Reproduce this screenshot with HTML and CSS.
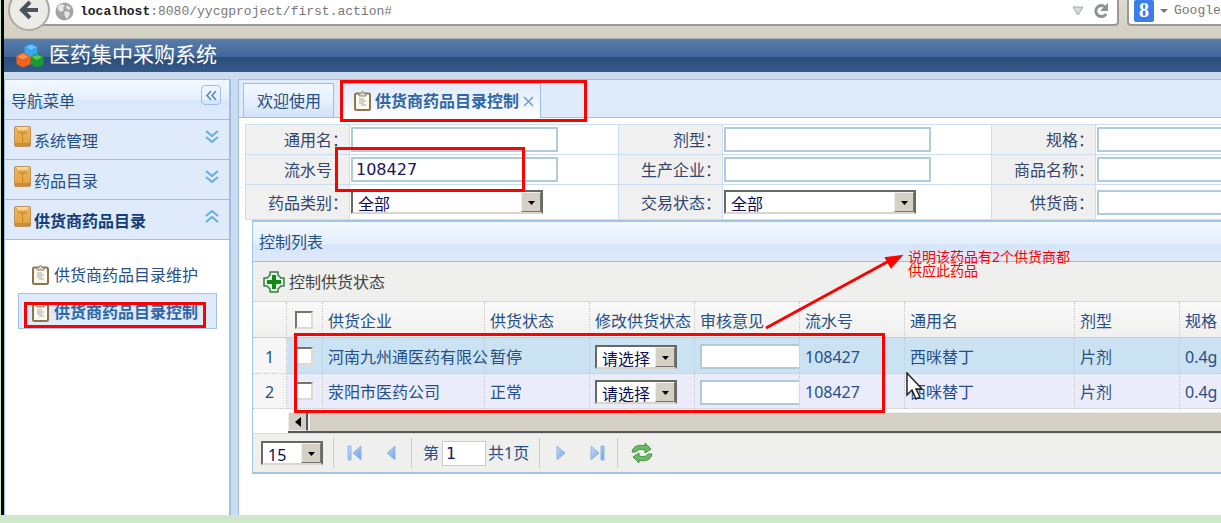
FILE: index.html
```
<!DOCTYPE html>
<html lang="zh-CN">
<head>
    <meta charset="UTF-8">
    <meta name="viewport" content="width=device-width, initial-scale=1.0">
    <title>医药集中采购系统</title>
    <link rel="stylesheet" href="styles.css">
</head>
<body>
    <!-- icons used more than once -->
    <svg class="sprite" aria-hidden="true">
        <defs>
            <linearGradient id="gold" x1="0" y1="0" x2="0" y2="1">
                <stop offset="0" stop-color="#f9d48c"/>
                <stop offset="0.25" stop-color="#eeb353"/>
                <stop offset="1" stop-color="#e2a03f"/>
            </linearGradient>
            <linearGradient id="blue" x1="0" y1="0" x2="1" y2="1">
                <stop offset="0" stop-color="#c4dcfa"/>
                <stop offset="1" stop-color="#6f9fe0"/>
            </linearGradient>
        </defs>
        <symbol id="i-box" viewBox="0 0 17 21">
            <rect x="0.500" y="0.500" width="16" height="20" rx="1.500" fill="url(#gold)" stroke="#c3935a"/>
            <path d="M1 1l3 4h9l3-4" fill="#f9d793" stroke="#d29a4c"/>
            <path d="M4 7h9M8.500 7v9" fill="none" stroke="#c07f28"/>
            <path d="M1 17h15v3H1z" fill="#c98a3a"/>
        </symbol>
        <symbol id="i-clip" viewBox="0 0 17 20">
            <rect x="1" y="2.500" width="15" height="16.500" rx="1.500" fill="#fdfaf0" stroke="#8f7450" stroke-width="2"/>
            <path d="M5 5V2.500h2L8 .5h1l1 2h2V5z" fill="#dedbd0" stroke="#8a8374"/>
            <path d="M5 8h5M5 10h7M5 12h5M7 14h5" stroke="#aaa69c" fill="none"/>
        </symbol>
        <symbol id="i-down" viewBox="0 0 15 14">
            <path d="M1 1l6 5 6-5M1 7l6 5 6-5" fill="none" stroke="#65ace0" stroke-width="2"/>
        </symbol>
        <symbol id="i-up" viewBox="0 0 15 14">
            <path d="M1 6l6-5 6 5M1 12l6-5 6 5" fill="none" stroke="#65ace0" stroke-width="2"/>
        </symbol>
        <symbol id="i-arrow" viewBox="0 0 18 18">
            <path d="M6 8h7l-3.500 4z" fill="#000"/>
        </symbol>
    </svg>

    <div class="page">
        <div class="browser-bar">
            <button class="back" aria-label="后退">
                <svg width="22" height="22" viewBox="0 0 22 22"><path d="M12 3L4 11l8 8M5 11h15" fill="none" stroke="#4b545c" stroke-width="4"/></svg>
            </button>
            <div class="url">
                <svg width="19" height="19" viewBox="0 0 19 19"><circle cx="9.500" cy="9.500" r="9" fill="#a3a3a3"/><path d="M3 4l4-2 3 2-2 2 1 2-3 2-3-2zM9 10l4-1 2 3-3 5-2-3zM12 3l4 3-2 2-3-2z" fill="#e6e6e6"/></svg>
                <span class="address"><b>localhost</b>:8080/yycgproject/first.action#</span>
                <svg width="12" height="11" viewBox="0 0 12 11"><path d="M1 1h10L6 9z" fill="#d6dadb" stroke="#a5abad"/></svg>
                <svg class="reload" width="16" height="16" viewBox="0 0 16 16"><path d="M12 4a5.500 5.500 0 1 0 1 7" fill="none" stroke="#8b9298" stroke-width="3"/><path d="M15 0v8H7z" fill="#8b9298"/></svg>
            </div>
            <div class="search">
                <span class="google">8</span>
                <svg width="8" height="6" viewBox="0 0 8 6"><path d="M0 1h8L4 5z" fill="#777"/></svg>
                <span>Google</span>
            </div>
        </div>

        <header class="header">
            <svg width="28" height="24" viewBox="0 0 28 24">
                <path d="M15 0l6 3v7l-6 3-6-3V3z" fill="#35a8ee" stroke="#35a8ee" stroke-linejoin="round"/>
                <path d="M15 1l5 2-5 3-5-3z" fill="#6cc5fb"/>
                <path d="M21 10l6 3v7l-6 3-6-3v-7z" fill="#1d9a38" stroke="#1d9a38" stroke-linejoin="round"/>
                <path d="M21 11l5 2-5 3-5-3z" fill="#5cc957"/>
                <path d="M7 9l7 3v8l-7 3-6-3v-8z" fill="#ef6321" stroke="#ef6321" stroke-linejoin="round"/>
                <path d="M7 10l5 3-5 2-5-2z" fill="#ff9a55"/>
            </svg>
            <h1>医药集中采购系统</h1>
        </header>

        <div class="layout">
            <aside class="sidebar">
                <div class="side-title">
                    <span>导航菜单</span>
                    <button class="collapse" aria-label="收起">
                        <svg width="12" height="11" viewBox="0 0 12 11"><path d="M6 1L2 5.500 6 10M11 1L7 5.500 11 10" fill="none" stroke="#4f86bf" stroke-width="1.500"/></svg>
                    </button>
                </div>
                <a class="group" href="#"><svg class="box"><use href="#i-box"/></svg><span>系统管理</span><svg class="chev"><use href="#i-down"/></svg></a>
                <a class="group" href="#"><svg class="box"><use href="#i-box"/></svg><span>药品目录</span><svg class="chev"><use href="#i-down"/></svg></a>
                <a class="group open" href="#"><svg class="box"><use href="#i-box"/></svg><span>供货商药品目录</span><svg class="chev"><use href="#i-up"/></svg></a>
                <nav class="menu">
                    <a href="#"><svg class="clip"><use href="#i-clip"/></svg>供货商药品目录维护</a>
                    <a class="selected" href="#"><svg class="clip"><use href="#i-clip"/></svg>供货商药品目录控制</a>
                </nav>
            </aside>

            <main class="main">
                <div class="tabs">
                    <a class="tab" href="#">欢迎使用</a>
                    <a class="tab active" href="#"><svg class="clip"><use href="#i-clip"/></svg>供货商药品目录控制<svg class="close" viewBox="0 0 11 11"><path d="M1 1l9 9M10 1l-9 9" stroke="#6d9fd1" stroke-width="1.500"/></svg></a>
                </div>

                <div class="content">
                    <table class="query">
                        <tr>
                            <th><label for="q-name">通用名：</label></th>
                            <td><input id="q-name" type="text"></td>
                            <th><label for="q-form">剂型：</label></th>
                            <td><input id="q-form" type="text"></td>
                            <th><label for="q-spec">规格：</label></th>
                            <td><input id="q-spec" type="text"></td>
                        </tr>
                        <tr>
                            <th><label for="q-no">流水号：</label></th>
                            <td><input id="q-no" type="text" value="108427"></td>
                            <th><label for="q-maker">生产企业：</label></th>
                            <td><input id="q-maker" type="text"></td>
                            <th><label for="q-goods">商品名称：</label></th>
                            <td><input id="q-goods" type="text"></td>
                        </tr>
                        <tr class="last">
                            <th><label for="q-type">药品类别：</label></th>
                            <td><span class="select wide"><select id="q-type"><option>全部</option></select><svg><use href="#i-arrow"/></svg></span></td>
                            <th><label for="q-state">交易状态：</label></th>
                            <td><span class="select wide"><select id="q-state"><option>全部</option></select><svg><use href="#i-arrow"/></svg></span></td>
                            <th><label for="q-supplier">供货商：</label></th>
                            <td><input id="q-supplier" type="text"></td>
                        </tr>
                    </table>

                    <section class="panel">
                        <h2>控制列表</h2>
                        <div class="toolbar">
                            <button class="tool">
                                <svg width="22" height="22" viewBox="0 0 22 22"><path d="M7 1h8v3l3 3h3v8h-3l-3 3v3H7v-3l-3-3H1V7h3l3-3z" fill="#e2f3e0" stroke="#3c7b45" stroke-width="1.500" stroke-linejoin="round"/><path d="M9 4h4v5h5v4h-5v5H9v-5H4V9h5z" fill="#128a1b"/></svg>
                                控制供货状态
                            </button>
                        </div>
                        <table class="grid">
                            <colgroup>
                                <col class="c-num"><col class="c-check"><col class="c-company"><col class="c-std"><col class="c-std"><col class="c-std"><col class="c-std"><col class="c-name"><col class="c-std"><col class="c-std">
                            </colgroup>
                            <thead>
                                <tr>
                                    <th></th>
                                    <th class="check"><input type="checkbox" aria-label="全选"></th>
                                    <th>供货企业</th>
                                    <th>供货状态</th>
                                    <th>修改供货状态</th>
                                    <th>审核意见</th>
                                    <th>流水号</th>
                                    <th>通用名</th>
                                    <th>剂型</th>
                                    <th>规格</th>
                                </tr>
                            </thead>
                            <tbody>
                                <tr class="hover">
                                    <td class="num">1</td>
                                    <td class="check"><input type="checkbox" aria-label="选择第1行"></td>
                                    <td>河南九州通医药有限公</td>
                                    <td>暂停</td>
                                    <td><span class="select"><select aria-label="修改供货状态"><option>请选择</option></select><svg><use href="#i-arrow"/></svg></span></td>
                                    <td class="opinion"><input type="text" aria-label="审核意见"></td>
                                    <td>108427</td>
                                    <td>西咪替丁</td>
                                    <td>片剂</td>
                                    <td>0.4g</td>
                                </tr>
                                <tr>
                                    <td class="num">2</td>
                                    <td class="check"><input type="checkbox" aria-label="选择第2行"></td>
                                    <td>荥阳市医药公司</td>
                                    <td>正常</td>
                                    <td><span class="select"><select aria-label="修改供货状态"><option>请选择</option></select><svg><use href="#i-arrow"/></svg></span></td>
                                    <td class="opinion"><input type="text" aria-label="审核意见"></td>
                                    <td>108427</td>
                                    <td>西咪替丁</td>
                                    <td>片剂</td>
                                    <td>0.4g</td>
                                </tr>
                            </tbody>
                        </table>
                        <div class="scroll">
                            <button aria-label="向左滚动"><svg width="6" height="10" viewBox="0 0 6 10"><path d="M6 0v10L0 5z" fill="#000"/></svg></button>
                            <div class="thumb"></div>
                        </div>
                        <div class="pager">
                            <span class="select size"><select aria-label="每页条数"><option>15</option></select><svg><use href="#i-arrow"/></svg></span>
                            <i class="sep"></i>
                            <button aria-label="首页"><svg width="15" height="16" viewBox="0 0 15 16"><path d="M1 1h3v14H1zM14 1v14L6 8z" fill="url(#blue)" stroke="#94b7e6"/></svg></button>
                            <button aria-label="上一页"><svg width="15" height="16" viewBox="0 0 15 16"><path d="M11 1v14L3 8z" fill="url(#blue)" stroke="#94b7e6"/></svg></button>
                            <i class="sep"></i>
                            <label class="page-no">第<input type="text" value="1"></label>
                            <span class="total">共1页</span>
                            <i class="sep"></i>
                            <button aria-label="下一页"><svg width="15" height="16" viewBox="0 0 15 16"><path d="M4 1v14l8-7z" fill="url(#blue)" stroke="#94b7e6"/></svg></button>
                            <button aria-label="末页"><svg width="15" height="16" viewBox="0 0 15 16"><path d="M1 1v14l8-7zM11 1h3v14h-3z" fill="url(#blue)" stroke="#94b7e6"/></svg></button>
                            <i class="sep"></i>
                            <button aria-label="刷新"><svg width="22" height="20" viewBox="0 0 22 20"><path d="M1 9C2 3 8 1 14 3V0l6 6-6 4V7C10 6 7 6 5 9z" fill="#6cbb63" stroke="#43914a"/><path d="M21 11c-1 6-7 8-13 6v3l-6-6 6-4v3c4 1 7 1 9-2z" fill="#6cbb63" stroke="#43914a"/></svg></button>
                        </div>
                    </section>
                </div>
            </main>
        </div>
    </div>

    <!-- notes drawn over the page -->
    <div class="mark mark-tab"></div>
    <div class="mark mark-no"></div>
    <div class="mark mark-menu"></div>
    <div class="mark mark-rows"></div>
    <svg class="pointer-line" width="140" height="80" viewBox="0 0 140 80"><path d="M2 76L125 9" stroke="#f00" stroke-width="3"/><path d="M137 4l-10 11-5-9z" fill="#f00" stroke="#f00" stroke-width="2"/></svg>
    <p class="note">说明该药品有2个供货商都<br>供应此药品</p>
    <svg class="cursor" width="17" height="28" viewBox="0 0 17 28"><path d="M1 1v22l5-5 4 9 4-2-4-8h6z" fill="#fff" stroke="#222" stroke-width="1.500"/></svg>
</body>
</html>
```
FILE: styles.css
```
* {
    box-sizing: border-box;
}
body {
    margin: 0;
    padding: 0 0 8px 1px;
    height: 100vh;
    overflow: hidden;
    background: #cfe8cc;
    font: 16px/20px "Noto Sans", "Noto Sans CJK SC", sans-serif;
    color: #264f86;
}
a {
    color: inherit;
    text-decoration: none;
}
button {
    padding: 0;
    border: none;
    background: none;
    font: inherit;
    color: inherit;
    display: flex;
    align-items: center;
    justify-content: center;
}
svg {
    flex: none;
}
.sprite {
    position: absolute;
    width: 0;
    height: 0;
}
.page {
    height: 100%;
    border-left: 3px solid #000;
    background: #cbdcef;
    display: flex;
    flex-direction: column;
    overflow: hidden;
}

/* browser toolbar */
.browser-bar {
    height: 39px;
    flex: none;
    display: flex;
    align-items: flex-start;
    background: linear-gradient(#dedacf, #d3cfc2);
    border-bottom: 1px solid #a9b1b5;
    overflow: hidden;
    font: 13px/24px "Liberation Mono", monospace;
    color: #777;
}
.back {
    width: 42px;
    height: 42px;
    flex: none;
    margin: -11px 0 0 4px;
    border: 2px solid #aaa9a4;
    border-radius: 50%;
    background: #ecebe7;
    z-index: 1;
}
.url {
    flex: 1;
    height: 26px;
    margin-left: -10px;
    padding: 0 8px 2px 15px;
    display: flex;
    align-items: center;
    background: #fff;
    border: solid #999;
    border-width: 0 2px 2px 0;
    border-radius: 0 0 4px 4px;
}
.address {
    flex: 1;
    padding-top: 2px;
    margin-left: 6px;
}
.address b {
    color: #222;
}
.reload {
    margin-left: 9px;
}
.search {
    width: 94px;
    height: 26px;
    margin-left: 8px;
    padding: 0 0 2px 5px;
    display: flex;
    align-items: center;
    gap: 6px;
    background: #fff;
    border: solid #999;
    border-width: 0 0 2px 2px;
    border-radius: 0 0 0 4px;
    overflow: hidden;
}
.google {
    width: 20px;
    height: 22px;
    flex: none;
    background: #3b7de9;
    border-radius: 2px;
    color: #fff;
    font: bold 20px/20px "Liberation Serif", serif;
    text-align: center;
}

/* system header */
.header {
    height: 33px;
    flex: none;
    padding-left: 12px;
    display: flex;
    align-items: center;
    gap: 5px;
    background: linear-gradient(#587daa, #41679a 54%, #2b4d7c 55%, #355a88);
}
.header h1 {
    margin: 0;
    padding-bottom: 3px;
    color: #fff;
    font-size: 21px;
    font-weight: 400;
    line-height: 30px;
}
.layout {
    flex: 1;
    min-height: 0;
    margin-top: 7px;
    display: flex;
    gap: 7px;
}

/* navigation */
.sidebar {
    width: 227px;
    flex: none;
    background: #fff;
    border: solid #9dbfe4;
    border-width: 1px 2px 0 1px;
}
.side-title {
    height: 40px;
    padding: 5px 8px 0 6px;
    display: flex;
    justify-content: space-between;
    align-items: flex-start;
    background: linear-gradient(#f3f8ff, #e4effd 50%, #d7e6fa 51%, #dfebfb);
    border-bottom: 1px solid #9dbfe4;
    line-height: 32px;
}
.collapse {
    width: 20px;
    height: 20px;
    border: 1px solid #9dbfe4;
    border-radius: 4px;
}
.group {
    height: 40px;
    padding: 0 9px 0 9px;
    display: flex;
    align-items: center;
    gap: 3px;
    background: #dfeafb;
    border-bottom: 1px solid #9dbfe4;
}
.group span {
    flex: 1;
    padding-top: 3px;
}
.group .box {
    width: 17px;
    height: 21px;
    margin-bottom: 6px;
}
.group .chev {
    width: 15px;
    height: 14px;
    margin-bottom: 6px;
}
.group.open {
    color: #123d7a;
    font-weight: 700;
}
.menu {
    padding: 17px 12px 0 13px;
}
.menu a {
    height: 36px;
    padding-left: 13px;
    display: flex;
    align-items: center;
    gap: 5px;
    border: 1px solid transparent;
    white-space: nowrap;
}
.menu .selected {
    padding-top: 2px;
    background: #dfeafb;
    border-color: #a3c3e6;
    color: #3066a5;
    font-weight: 700;
}
.clip {
    width: 17px;
    height: 20px;
}

/* tabs */
.main {
    flex: 1;
    min-width: 0;
    overflow: hidden;
    background: #fff;
    border: solid #9dbfe4;
    border-width: 1px 0 0 1px;
}
.tabs {
    height: 38px;
    padding: 3px 0 0 4px;
    display: flex;
    gap: 6px;
    background: #dfeafb;
    border-bottom: 1px solid #9dbfe4;
}
.tab {
    height: 34px;
    padding: 0 12px 0 13px;
    display: flex;
    align-items: center;
    background: linear-gradient(#f1f7ff, #e3eefc 60%, #d2e1f7);
    border: 1px solid #9dbfe4;
    border-bottom: none;
    white-space: nowrap;
}
.tab.active {
    height: 35px;
    padding: 0 6px 0 13px;
    gap: 4px;
    background: linear-gradient(#dfeafb, #fff);
    color: #3066a5;
    font-weight: 700;
}
.close {
    width: 11px;
    height: 11px;
}
.content {
    padding: 6px 0 0 6px;
}

/* query form */
.query {
    width: 1119px;
    table-layout: fixed;
    border-collapse: collapse;
}
.query th,
.query td {
    height: 30px;
    padding: 0 1px;
    border: 1px solid #cadff2;
}
.query th {
    width: 104px;
    padding-top: 1px;
    background: #f0f0f0;
    font-weight: 400;
    text-align: right;
    color: #34466c;
}
.query td {
    width: 269px;
}
.query .last th,
.query .last td {
    height: 35px;
}
input[type="text"] {
    display: block;
    width: 207px;
    height: 25px;
    padding: 0 3px;
    border: 2px solid #afcbdc;
    border-radius: 0;
    outline: none;
    background: #fff;
    font: 16px/20px "DejaVu Sans", sans-serif;
    color: #1b1464;
}
.select {
    position: relative;
    display: block;
    width: 82px;
    height: 24px;
}
.select.wide {
    width: 192px;
}
.select select {
    display: block;
    width: 100%;
    height: 100%;
    padding: 2px 0 0 5px;
    appearance: none;
    border: 2px solid #6a6960;
    border-bottom-color: #d9d6cc;
    border-radius: 0;
    background: #fff;
    font: 16px/20px "Noto Sans", "Noto Sans CJK SC", sans-serif;
    color: #0b0b58;
}
.select svg {
    position: absolute;
    top: 2px;
    right: 2px;
    width: 20px;
    height: 20px;
    background: #d4d0c6;
    border: 1px solid #eee;
    border-right-color: #777;
    border-bottom-color: #777;
    pointer-events: none;
}

/* list panel */
.panel {
    margin-left: 7px;
    border: solid #a5c4e4;
    border-width: 2px 0 2px 1px;
}
.panel h2 {
    height: 40px;
    margin: 0;
    padding: 0 6px;
    background: linear-gradient(#f2f8ff, #e4effc 55%, #d5e4fa 58%, #dfebfb);
    border-bottom: 1px solid #9dbfe4;
    font-size: 16px;
    font-weight: 400;
    line-height: 40px;
}
.toolbar {
    height: 40px;
    padding-left: 10px;
    display: flex;
    align-items: center;
    background: #efefed;
    border-bottom: 1px solid #d6d6d6;
}
.tool {
    gap: 4px;
    color: #444;
}
.grid {
    width: 1032px;
    table-layout: fixed;
    border-collapse: separate;
    border-spacing: 0;
}
.c-num {
    width: 34px;
}
.c-check {
    width: 36px;
}
.c-company {
    width: 162px;
}
.c-std {
    width: 105px;
}
.c-name {
    width: 170px;
}
.grid th,
.grid td {
    height: 35px;
    padding: 2px 0 0 5px;
    border-right: 1px dotted #c8c8c8;
    border-bottom: 1px dotted #c8c8c8;
    font-weight: 400;
    text-align: left;
    white-space: nowrap;
}
.grid th {
    height: 36px;
    background: linear-gradient(#f9f9f9, #f0f0ef);
    border-bottom: 1px solid #ccc;
}
.grid td {
    background: #eaecfc;
}
.grid .hover td {
    height: 36px;
    background: #cbe2f2;
}
.grid .num,
.grid .hover .num {
    padding-left: 0;
    background: #f6f6f6;
    text-align: center;
}
.grid .check {
    padding: 0 0 0 8px;
}
input[type="checkbox"] {
    display: block;
    width: 18px;
    height: 18px;
    margin: 0;
    appearance: none;
    background: #fff;
    border: 2px solid #77756c;
    border-right-color: #dedbd2;
    border-bottom-color: #dedbd2;
}
.grid .opinion input {
    width: 100%;
    border-right: none;
}
.scroll {
    height: 21px;
    margin: 3px 0 0 35px;
    display: flex;
    background: #d4d0c6;
    border-bottom: 2px solid #555;
}
.scroll button {
    width: 20px;
    border: 1px solid #eee;
    border-right: 2px solid #555;
}
.thumb {
    flex: 1;
    border-top: 1px solid #eee;
    border-left: 2px solid #eee;
}
.pager {
    height: 39px;
    padding-left: 8px;
    display: flex;
    align-items: center;
    background: #efefed;
    border-top: 1px solid #ddd;
}
.size {
    width: 62px;
}
.sep {
    width: 1px;
    height: 30px;
    margin: 0 11px 0 10px;
    background: #ccc;
}
.pager button {
    margin: 0 2px;
}
.pager button + button {
    margin-left: 20px;
}
.page-no {
    display: flex;
    align-items: center;
    gap: 3px;
}
.page-no input[type="text"] {
    width: 44px;
    border: 1px solid #ccc;
}
.total {
    margin-left: 2px;
}

/* notes */
.mark {
    position: absolute;
    border: 3px solid #f00;
}
.mark-tab {
    left: 340px;
    top: 80px;
    width: 247px;
    height: 42px;
}
.mark-no {
    left: 335px;
    top: 147px;
    width: 190px;
    height: 45px;
}
.mark-menu {
    left: 24px;
    top: 302px;
    width: 182px;
    height: 26px;
}
.mark-rows {
    left: 294px;
    top: 333px;
    width: 591px;
    height: 80px;
}
.pointer-line {
    position: absolute;
    left: 764px;
    top: 252px;
}
.note {
    position: absolute;
    left: 908px;
    top: 250px;
    margin: 0;
    color: #f00;
    font-size: 14px;
    line-height: 14px;
}
.cursor {
    position: absolute;
    left: 906px;
    top: 372px;
}
```
